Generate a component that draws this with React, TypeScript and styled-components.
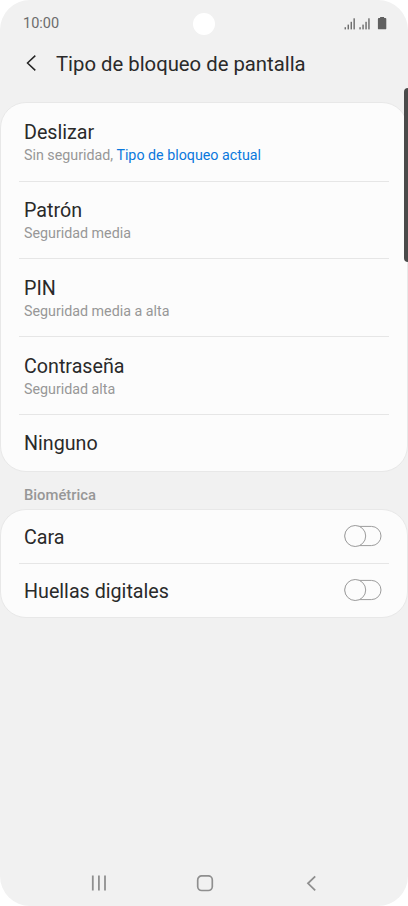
import React from 'react';
import styled, { createGlobalStyle } from 'styled-components';

const GlobalStyle = createGlobalStyle`
  * { box-sizing: border-box; }
  body { margin: 0; background: #fff; font-family: Roboto, "Liberation Sans", sans-serif; }
`;

const Phone = styled.main`
  position: relative;
  display: flex;
  flex-direction: column;
  width: 408px;
  height: 906px;
  border-radius: 30px;
  background: #f1f1f1;
  color: #2a2a2a;
  overflow: hidden;
`;

const StatusBar = styled.div`
  display: grid;
  grid-template-columns: 1fr 22px 1fr;
  align-items: center;
  height: 47px;
  padding: 0 22px 0 22px;
`;

const Clock = styled.span`
  padding: 1px 0 0 1px;
  font-size: 14.5px;
  line-height: 18px;
  color: #6c6c6c;
`;

const Camera = styled.span`
  width: 22px;
  height: 22px;
  border-radius: 50%;
  background: #fff;
`;

const StatusIcons = styled.svg`
  justify-self: end;
  display: block;
  margin-right: -1px;
`;

const Header = styled.header`
  display: flex;
  align-items: center;
  height: 55px;
  padding: 0 24px 21px;
`;

const BackButton = styled.button`
  display: flex;
  width: 32px;
  padding: 0 0 2px;
  border: 0;
  background: none;
`;

const Title = styled.h1`
  margin: 0;
  font-size: 20.3px;
  line-height: 28px;
  font-weight: 400;
  white-space: nowrap;
`;

const Card = styled.section`
  border: 1px solid #e8e8e8;
  border-radius: 26px;
  background: #fcfcfc;
  padding: 0 18px;
`;

const Row = styled.div<{ $height: number }>`
  display: flex;
  align-items: center;
  justify-content: space-between;
  height: ${(p) => p.$height}px;
  padding: 2px 7px 0 5px;
  & + & { border-top: 1px solid #e6e6e6; }
`;

const RowTitle = styled.div`
  font-size: 19.7px;
  line-height: 25px;
`;

const RowDetail = styled.div`
  font-size: 14.27px;
  line-height: 20px;
  color: #979797;
`;

const Current = styled.span`
  color: #0a78dc;
`;

const SectionLabel = styled.h2`
  margin: 0;
  height: 37px;
  padding: 13px 24px 0;
  font-size: 14.8px;
  line-height: 20px;
  font-weight: 500;
  color: #979797;
`;

const Switch = styled.button`
  display: flex;
  padding: 0 0 2px;
  border: 0;
  background: none;
`;

const SideKey = styled.div`
  position: absolute;
  top: 88px;
  right: 0;
  width: 4px;
  height: 174px;
  border-radius: 4px 0 0 4px;
  background: #4a4a4a;
`;

const NavBar = styled.nav`
  display: flex;
  justify-content: space-between;
  align-items: center;
  margin-top: auto;
  height: 46px;
  padding: 0 86px 0 88px;
`;

const locks = [
  { title: 'Deslizar', detail: 'Sin seguridad, ', current: 'Tipo de bloqueo actual', height: 77.5 },
  { title: 'Patrón', detail: 'Seguridad media', height: 77.8 },
  { title: 'PIN', detail: 'Seguridad media a alta', height: 77.8 },
  { title: 'Contraseña', detail: 'Seguridad alta', height: 77.8 },
  { title: 'Ninguno', height: 57.1 },
];

const biometrics = [
  { title: 'Cara', height: 53 },
  { title: 'Huellas digitales', height: 54 },
];

const Toggle = ({ label }: { label: string }) => (
  <Switch role="switch" aria-checked={false} aria-label={label}>
    <svg width="38" height="24" viewBox="0 0 38 24" fill="#fcfcfc" stroke="#9c9c9c">
      <rect x="1" y="2.4" width="36" height="19.2" rx="9.6" />
      <circle cx="11.2" cy="12" r="10.5" />
    </svg>
  </Switch>
);

export default function App() {
  return (
    <>
      <GlobalStyle />
      <Phone>
        <StatusBar>
          <Clock>10:00</Clock>
          <Camera />
          <StatusIcons width="43" height="14" viewBox="0 0 43 14" fill="#606060">
            {[0, 14.8].map((x) => (
              <g key={x} transform={`translate(${x} -0.2)`}>
                <rect x="0.6" y="10.4" width="1.3" height="2.2" />
                <rect x="3.6" y="7.8" width="1.3" height="4.8" />
                <rect x="6.6" y="5" width="1.3" height="7.6" />
                <rect x="9.5" y="1.5" width="1.3" height="11.1" />
              </g>
            ))}
            <path d="M36.1 0h4v1h1.3q.9 0 .9.9v9.5q0 .9-.9.9h-6.6q-.9 0-.9-.9V1.9q0-.9.9-.9h1.3z" />
          </StatusIcons>
        </StatusBar>
        <Header>
          <BackButton aria-label="Atrás">
            <svg width="14" height="18" viewBox="0 0 14 18" fill="none" stroke="#252525" strokeWidth="1.5">
              <path d="M11.3 1.6 3.5 9l7.8 7.4" />
            </svg>
          </BackButton>
          <Title>Tipo de bloqueo de pantalla</Title>
        </Header>
        <Card>
          {locks.map((lock) => (
            <Row key={lock.title} $height={lock.height}>
              <div>
                <RowTitle>{lock.title}</RowTitle>
                {lock.detail && (
                  <RowDetail>
                    {lock.detail}
                    {lock.current && <Current>{lock.current}</Current>}
                  </RowDetail>
                )}
              </div>
            </Row>
          ))}
        </Card>
        <SectionLabel>Biométrica</SectionLabel>
        <Card>
          {biometrics.map((item) => (
            <Row key={item.title} $height={item.height}>
              <RowTitle>{item.title}</RowTitle>
              <Toggle label={item.title} />
            </Row>
          ))}
        </Card>
        <NavBar>
          <svg width="22" height="18" viewBox="0 0 22 18" fill="none" stroke="#8f8f8f" strokeWidth="1.8">
            <path d="M4.8 1.6v15M10.9 1.6v15M17 1.6v15" />
          </svg>
          <svg width="18" height="18" viewBox="0 0 18 18" fill="none" stroke="#8f8f8f" strokeWidth="1.7">
            <rect x="1.7" y="1.9" width="14.6" height="14.6" rx="4" />
          </svg>
          <svg width="22" height="18" viewBox="0 0 22 18" fill="none" stroke="#8f8f8f" strokeWidth="1.8">
            <path d="M15.2 2.3 8 9.3l7.2 7" />
          </svg>
        </NavBar>
        <SideKey />
      </Phone>
    </>
  );
}
